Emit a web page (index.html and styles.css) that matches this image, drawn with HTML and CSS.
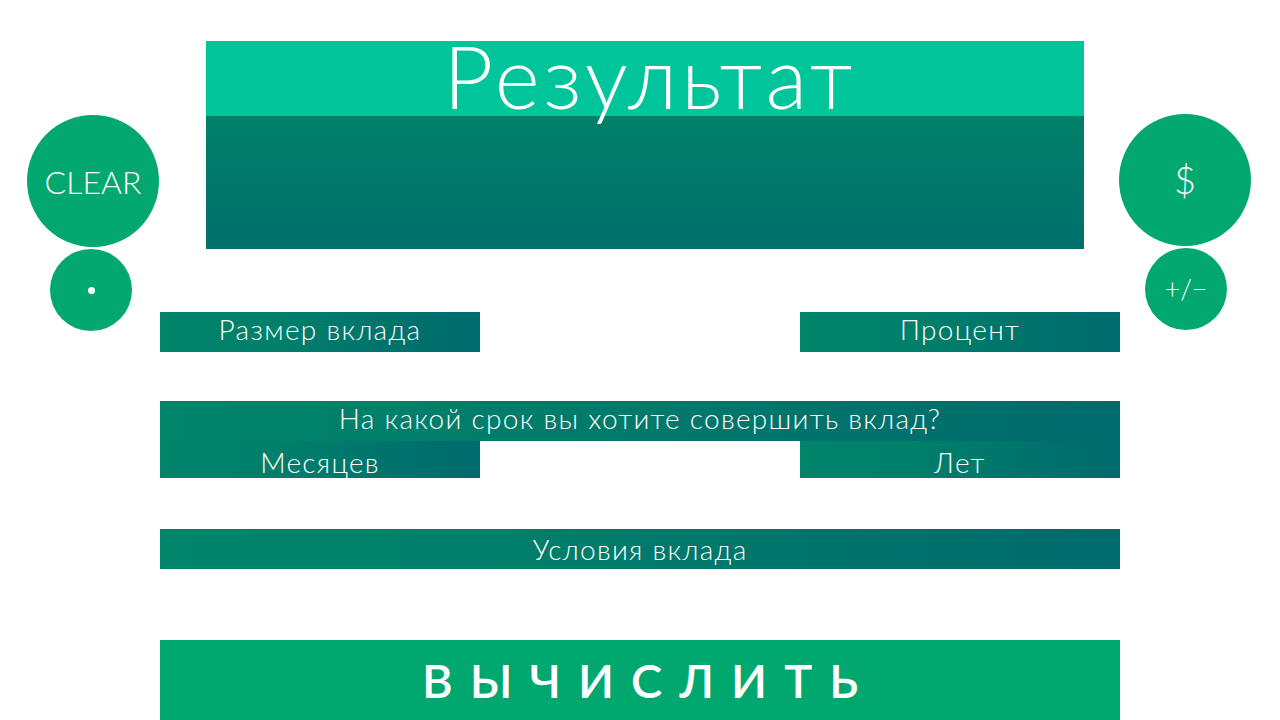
FILE: index.html
```html
<!DOCTYPE html>
<html lang="ru">
<head>
<meta charset="utf-8">
<title>Калькулятор вклада</title>
<link rel="stylesheet" href="styles.css">
</head>
<body>
<div class="page">
  <aside class="side side-left">
    <button class="circle circle-big">CLEAR</button>
    <button class="circle circle-small"><span class="dot"></span></button>
  </aside>

  <main class="main">
    <section class="result">
      <h1 class="result-title">Результат</h1>
      <div class="result-body"></div>
    </section>

    <div class="pair pair-first">
      <div class="bar bar-half">Размер вклада</div>
      <div class="bar bar-half">Процент</div>
    </div>

    <div class="term">
      <div class="bar bar-full">На какой срок вы хотите совершить вклад?</div>
      <div class="pair">
        <div class="bar bar-half bar-low">Месяцев</div>
        <div class="bar bar-half bar-low">Лет</div>
      </div>
    </div>

    <div class="bar bar-full bar-cond">Условия вклада</div>

    <button class="calc">ВЫЧИСЛИТЬ</button>
  </main>

  <aside class="side side-right">
    <button class="circle circle-big circle-dollar">$</button>
    <button class="circle circle-small circle-sign">+/−</button>
  </aside>
</div>
</body>
</html>
```

FILE: styles.css
```css
html, body {
  margin: 0;
  padding: 0;
  background: #ffffff;
  overflow: hidden;
}

body {
  font-family: "Lato", "Open Sans", "DejaVu Sans", sans-serif;
  font-weight: 300;
  color: #ffffff;
}

.page {
  display: flex;
  width: 1280px;
  height: 720px;
}

.side {
  width: 160px;
  flex: none;
  display: flex;
  flex-direction: column;
  align-items: flex-start;
}

.side-left {
  padding-top: 115px;
  padding-left: 27px;
  box-sizing: border-box;
}

.side-left .circle-small {
  margin-left: 23px;
}

.side-right {
  padding-top: 114px;
  margin-left: -1px;
}

.side-right .circle-small {
  margin-left: 26px;
}

.circle {
  border: none;
  padding: 0;
  margin: 0;
  border-radius: 50%;
  background: #02a870;
  color: #ffffff;
  font-family: "Lato", "Open Sans", sans-serif;
  font-weight: 300;
  display: flex;
  align-items: center;
  justify-content: center;
  flex: none;
}

.circle-big {
  width: 132px;
  height: 132px;
  font-size: 32px;
}

.circle-small {
  width: 82px;
  height: 82px;
  margin-top: 2px;
}

.circle-dollar {
  font-size: 38px;
  padding-bottom: 2px;
}

.circle-sign {
  font-size: 27px;
  padding-bottom: 2px;
}

.dot {
  width: 7px;
  height: 7px;
  border-radius: 50%;
  background: #ffffff;
}

.main {
  width: 960px;
  flex: none;
  display: flex;
  flex-direction: column;
}

.result {
  margin: 41px 36px 0 46px;
}

.result-title {
  margin: 0;
  height: 75px;
  background: #00c59a;
  font-family: "Lato", "Open Sans", sans-serif;
  font-weight: 300;
  font-size: 86px;
  line-height: 69px;
  text-align: center;
  letter-spacing: 4px;
  padding-left: 10px;
}

.result-body {
  height: 133px;
  background: linear-gradient(180deg, #00806a 0%, #00706c 100%);
}

.pair {
  display: flex;
  justify-content: space-between;
}

.pair-first {
  margin-top: 63px;
}

.bar {
  height: 40px;
  box-sizing: border-box;
  background: linear-gradient(90deg, #00846a 0%, #007f6a 35%, #006a6d 100%);
  font-size: 28px;
  letter-spacing: 1.3px;
  line-height: 34px;
  text-align: center;
  white-space: nowrap;
}

.bar-half {
  width: 320px;
}

.bar-full {
  width: 960px;
}

.term {
  margin-top: 49px;
}

.term > .bar-full {
  background: linear-gradient(90deg, #00846a 0%, #007c6a 40%, #006a6d 100%);
}

.bar-low {
  height: 37px;
  line-height: 42px;
}

.bar-cond {
  margin-top: 51px;
  line-height: 41px;
}

.calc {
  margin: 71px 0 0;
  width: 960px;
  height: 80px;
  flex: none;
  border: none;
  padding: 0 0 0 17px;
  background: #00a86f;
  color: #ffffff;
  font-family: "Lato", "Open Sans", sans-serif;
  font-weight: 600;
  font-size: 47px;
  letter-spacing: 17px;
  text-align: center;
}
```
